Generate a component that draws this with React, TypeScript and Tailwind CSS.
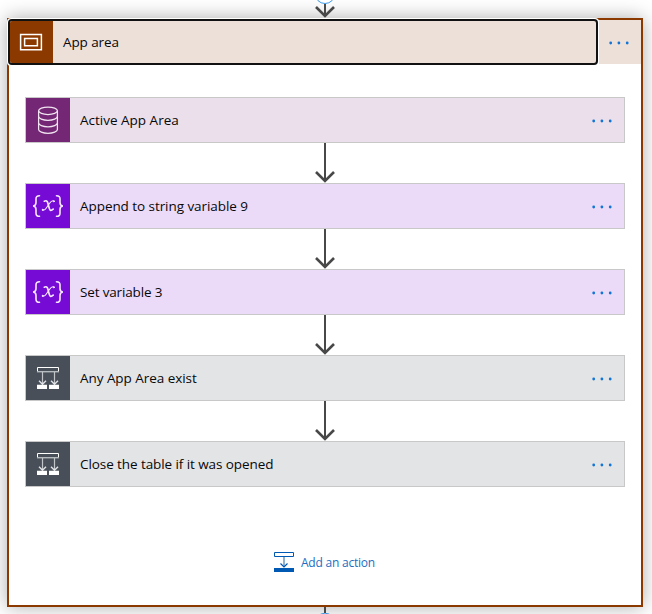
import React from "react";

type IconProps = { kind: string };

function DatabaseIcon() {
  return (
    <svg width="44" height="44" viewBox="0 0 44 44" fill="none" stroke="#f0e4f0" strokeWidth="1.250">
      <ellipse cx="22" cy="12.800" rx="9.400" ry="3.700" />
      <path d="M12.600 13v18.500c0 2 4.200 3.800 9.400 3.800s9.400-1.800 9.400-3.800V13" />
      <path d="M12.600 18.500c0 2 4.200 3.800 9.400 3.800s9.400-1.800 9.400-3.800M12.600 25c0 2 4.200 3.800 9.400 3.800s9.400-1.800 9.400-3.800" />
    </svg>
  );
}

function VariableIcon() {
  return (
    <svg width="44" height="44" viewBox="0 0 44 44" fill="none" stroke="#f4e9ff" strokeLinecap="round">
      <path strokeWidth="1.600" d="M13.500 11.700c-2.700 0-3.500 1-3.500 3.100v3.700c0 2-.9 3.300-2.900 3.500 2 .2 2.900 1.500 2.900 3.500v3.700c0 2.100.8 3.100 3.500 3.100" />
      <path strokeWidth="1.600" d="M30.500 11.700c2.700 0 3.500 1 3.500 3.100v3.700c0 2 .9 3.300 2.900 3.500-2 .2-2.900 1.500-2.900 3.500v3.700c0 2.100-.8 3.100-3.500 3.100" />
      <path strokeWidth="1.700" d="M18.300 17.200c2-1 3-.3 3.600 2l1.400 5.200c.6 2.200 1.700 2.700 3.900.7" />
      <path strokeWidth="1.100" d="M28 17c-1.600-.8-3 .2-4.200 2l-3.300 4.800c-1.300 2-2.500 3-4.100 2.300" />
      <circle cx="27.800" cy="17.300" r=".5" fill="#f4e9ff" />
      <circle cx="16.700" cy="25.800" r=".5" fill="#f4e9ff" />
    </svg>
  );
}

function ConditionIcon() {
  return (
    <svg width="44" height="44" viewBox="0 0 44 44" fill="none">
      <path d="M11.500 11.500h21v4h-21z" stroke="#fff" />
      <path d="M11 15.700h22" stroke="#b5babf" strokeWidth="1.400" />
      <path d="M16.500 16v12M28.500 16v12" stroke="#c1c5c9" strokeWidth="1.200" />
      <path d="M13 24.800l3.500 3.500 3.500-3.500M25 24.800l3.500 3.500 3.500-3.500" stroke="#e1e3e5" strokeWidth="1.400" />
      <path d="M11 28.700h10V33H11zM23 28.700h10V33H23z" fill="#fff" />
    </svg>
  );
}

function ActionIcon({ kind }: IconProps) {
  if (kind === "database") return <DatabaseIcon />;
  if (kind === "variable") return <VariableIcon />;
  return <ConditionIcon />;
}

function MoreDots() {
  return (
    <svg width="20" height="4" viewBox="0 0 20 4" fill="#1274d4">
      <circle cx="1.700" cy="2" r="1.400" />
      <circle cx="9.900" cy="2" r="1.400" />
      <circle cx="18.200" cy="2" r="1.400" />
    </svg>
  );
}

function Connector() {
  return (
    <svg className="mx-auto block" width="22" height="40" viewBox="0 0 22 40" fill="none" stroke="#484848">
      <path d="M11 0v38" strokeWidth="2" />
      <path d="M2 29l9 9 9-9" strokeWidth="2.600" />
    </svg>
  );
}

const actions = [
  { label: "Active App Area", kind: "database", icon: "bg-[#742774]", row: "bg-[#eadfea]", spacing: "tracking-[0px]" },
  { label: "Append to string variable 9", kind: "variable", icon: "bg-[#770bd6]", row: "bg-[#ebdbf9]", spacing: "tracking-[-0.06px]" },
  { label: "Set variable 3", kind: "variable", icon: "bg-[#770bd6]", row: "bg-[#ebdbf9]", spacing: "tracking-[-0.16px]" },
  { label: "Any App Area exist", kind: "condition", icon: "bg-[#484f58]", row: "bg-[#e3e4e6]", spacing: "tracking-[-0.05px]" },
  { label: "Close the table if it was opened", kind: "condition", icon: "bg-[#484f58]", row: "bg-[#e3e4e6]", spacing: "tracking-[-0.08px]" },
];

export default function App() {
  return (
    <div className="h-[614px] w-[652px] overflow-hidden bg-white font-['Open_Sans','Noto_Sans',sans-serif] text-[13.500px] text-[#080808]">
      <div className="flex h-[18px] justify-center pr-[2px]">
        <svg className="relative z-10" width="30" height="18" viewBox="0 0 30 18" fill="none">
          <path d="M15 4v12" stroke="#484848" strokeWidth="2" />
          <path d="M6 7l9 9 9-9" stroke="#484848" strokeWidth="2.600" />
          <circle cx="15" cy="-6.500" r="10" stroke="#3b99e8" fill="#fff" />
        </svg>
      </div>
      <section className="ml-[7px] h-[589px] w-[636px] border-2 border-[#8c3900] bg-white shadow-[0_0_18px_rgba(0,0,0,0.33)]">
        <header className="flex h-11">
          <div className="relative z-10 -mt-[2px] -ml-[2px] h-[48px] w-[592px] shrink-0 rounded-[4px] bg-white p-px">
            <div className="flex h-[46px] items-center overflow-hidden rounded-[4px] border-2 border-[#111] bg-[#ede0d9]">
              <div className="flex h-full w-[43px] items-center bg-[#8c3900]">
                <svg width="43" height="42" viewBox="0 0 43 42" fill="none" stroke="#fff">
                  <path d="M10.600 13.600h20.800v15.200H10.600z" strokeWidth="1.500" />
                  <path d="M14.600 17.600h12.800v7.200H14.600z" strokeWidth="1.500" />
                </svg>
              </div>
              <span className="ml-[10px] tracking-[-0.1px]">App area</span>
            </div>
          </div>
          <div className="flex flex-1 items-center bg-[#ede0d9] pt-[2px] pl-[10px]">
            <MoreDots />
          </div>
        </header>
        <div className="mt-[33px] px-4">
          {actions.map((action, index) => (
            <React.Fragment key={action.label}>
              {index > 0 && <Connector />}
              <div className={`flex h-[46px] items-center border border-[#c8c8c8] ${action.row}`}>
                <div className={`h-11 w-11 ${action.icon}`}>
                  <ActionIcon kind={action.kind} />
                </div>
                <span className={`ml-[10px] flex-1 whitespace-nowrap ${action.spacing}`}>{action.label}</span>
                <div className="mr-[12px] pt-[2px]"><MoreDots /></div>
              </div>
            </React.Fragment>
          ))}
        </div>
        <div className="mt-[65px] ml-[265px] flex h-5 items-center text-[12px] text-[#1b6ec2]">
          <svg width="20" height="20" viewBox="0 0 20 20" fill="none" stroke="#0059b3">
            <path d="M.5.500h19v4H.5z" />
            <path d="M10 5v10" stroke="#477fae" strokeWidth="1.200" />
            <path d="M6.500 11.500L10 15l3.500-3.500" strokeWidth="1.200" />
            <path d="M0 16h20v4H0z" fill="#0059b3" stroke="none" />
          </svg>
          <span className="ml-[7px] whitespace-nowrap pt-px tracking-[-0.22px]">Add an action</span>
        </div>
      </section>
      <svg className="relative z-10 mx-auto block -translate-x-px" width="22" height="7" viewBox="0 0 22 7" fill="none">
        <circle cx="11" cy="16.200" r="10" stroke="#3b99e8" fill="#fff" />
        <path d="M11 0v6" stroke="#484848" strokeWidth="2" />
      </svg>
    </div>
  );
}
